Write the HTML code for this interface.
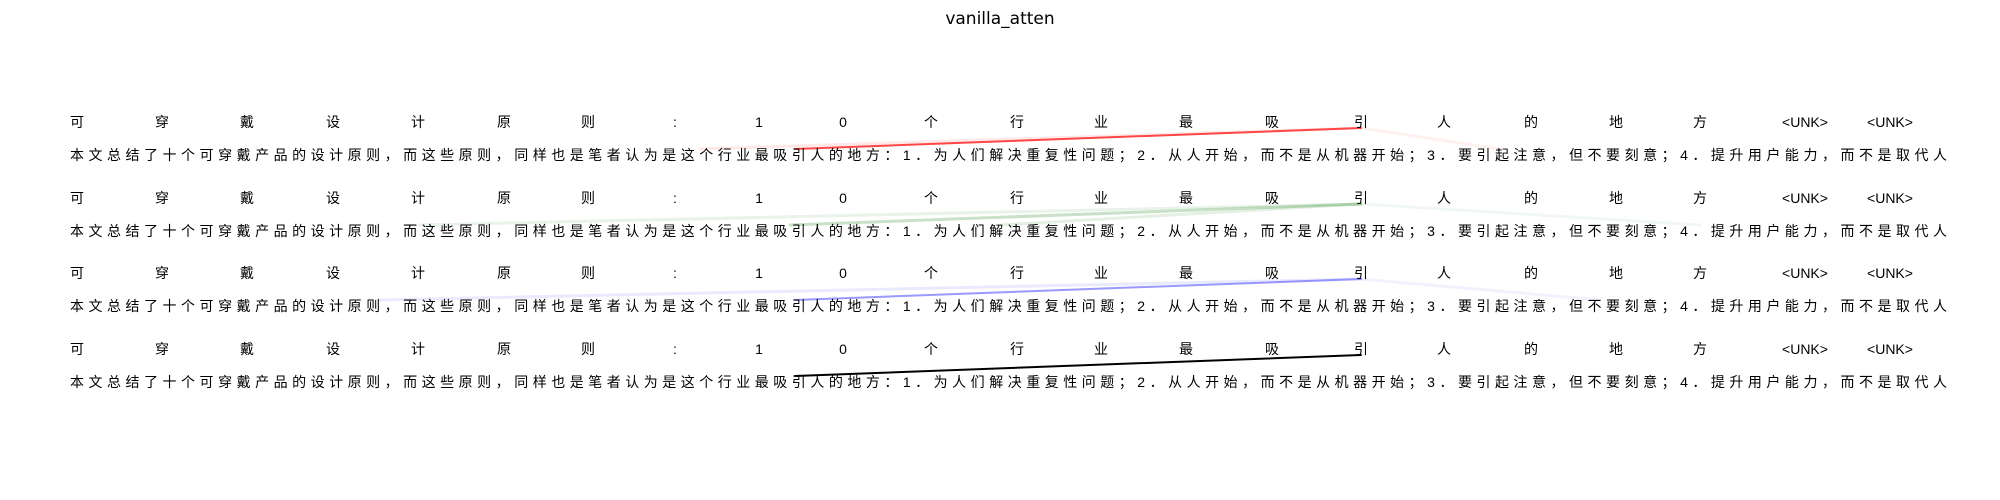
<!DOCTYPE html>
<html><head><meta charset="utf-8"><style>
html,body{margin:0;padding:0;background:#fff;width:2000px;height:500px;overflow:hidden}
svg text{font-family:"Liberation Sans","DejaVu Sans","Noto Sans CJK SC",sans-serif;fill:#000}
</style></head><body>
<svg width="2000" height="500" viewBox="0 0 2000 500" xmlns="http://www.w3.org/2000/svg">
<text x="1000" y="24" font-size="17" text-anchor="middle" style="font-family:'DejaVu Sans',sans-serif">vanilla_atten</text>
<defs>
<g id="top" font-size="14" text-anchor="middle">
<text x="77">可</text><text x="162">穿</text><text x="247">戴</text><text x="333">设</text><text x="418">计</text><text x="504">原</text><text x="588">则</text><text x="675">:</text><text x="759">1</text><text x="843">0</text><text x="931">个</text><text x="1017">行</text><text x="1101">业</text><text x="1186">最</text><text x="1272">吸</text><text x="1361">引</text><text x="1444">人</text><text x="1531">的</text><text x="1616">地</text><text x="1700">方</text><text x="1805">&lt;UNK&gt;</text><text x="1890">&lt;UNK&gt;</text>
</g>
<g id="bot" font-size="14"><text x="70" textLength="1877" lengthAdjust="spacing">本文总结了十个可穿戴产品的设计原则，而这些原则，同样也是笔者认为是这个行业最吸引人的地方：1．为人们解决重复性问题；2．从人开始，而不是从机器开始；3．要引起注意，但不要刻意；4．提升用户能力，而不是取代人</text></g>
</defs>
<!-- group 1 red -->
<g stroke-linecap="round" fill="none">
<line x1="1361" y1="128" x2="700" y2="149" stroke="#ff4444" stroke-opacity="0.12" stroke-width="3"/>
<line x1="1361" y1="128" x2="1500" y2="149" stroke="#ff4444" stroke-opacity="0.08" stroke-width="3"/>
<line x1="1361" y1="128" x2="795" y2="149" stroke="#ff3333" stroke-opacity="0.9" stroke-width="2"/>
<line x1="1361" y1="204" x2="420" y2="225" stroke="#4a9a4a" stroke-opacity="0.12" stroke-width="3"/>
<line x1="1361" y1="204" x2="790" y2="225" stroke="#4a9a4a" stroke-opacity="0.3" stroke-width="3"/>
<line x1="1361" y1="204" x2="1000" y2="225" stroke="#4a9a4a" stroke-opacity="0.15" stroke-width="3"/>
<line x1="1361" y1="204" x2="1700" y2="225" stroke="#4a9a4a" stroke-opacity="0.08" stroke-width="3"/>
<line x1="1361" y1="279" x2="380" y2="300" stroke="#5555ff" stroke-opacity="0.12" stroke-width="3"/>
<line x1="1361" y1="279" x2="795" y2="300" stroke="#5555ff" stroke-opacity="0.6" stroke-width="2"/>
<line x1="1361" y1="279" x2="1600" y2="300" stroke="#5555ff" stroke-opacity="0.08" stroke-width="3"/>
<line x1="1361" y1="355" x2="795" y2="376" stroke="#000" stroke-width="2"/>
</g>
<use href="#top" y="127"/><use href="#bot" y="160"/>
<use href="#top" y="203"/><use href="#bot" y="236"/>
<use href="#top" y="278"/><use href="#bot" y="311"/>
<use href="#top" y="354"/><use href="#bot" y="387"/>
</svg>
</body></html>
